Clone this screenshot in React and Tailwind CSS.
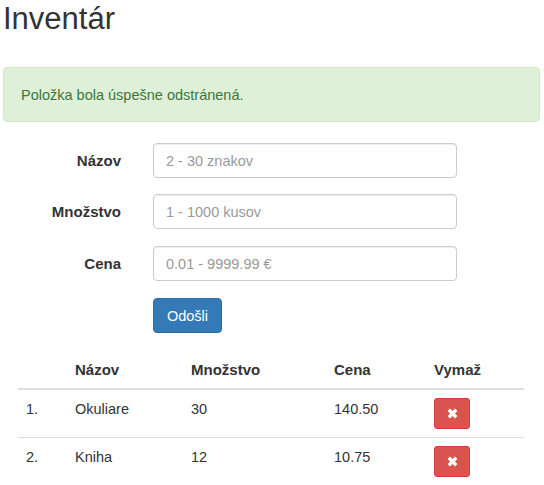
export default function App() {
  const rows = [
    { n: "1.", name: "Okuliare", qty: "30", price: "140.50" },
    { n: "2.", name: "Kniha", qty: "12", price: "10.75" },
  ];
  const font = { fontFamily: '"Liberation Sans", Arial, sans-serif' };
  return (
    <div className="w-[544px] bg-white text-[#333] text-[14.5px] leading-[20px] pl-[3px] pr-[4px]" style={font}>
      <h1 className="text-[31px] leading-[33px] mt-[2px] font-normal text-[#333]">Inventár</h1>
      <div className="mt-[32px] h-[55px] flex items-center border border-[#d6e9c6] bg-[#dff0d8] rounded-[4px] px-[17px] text-[#3c763d]">
        Položka bola úspešne odstránená.
      </div>
      <div className="mt-[21px] flex flex-col">
        {[
          ["Názov", "2 - 30 znakov", ""],
          ["Množstvo", "1 - 1000 kusov", "mt-[16px]"],
          ["Cena", "0.01 - 9999.99 €", "mt-[17px]"],
        ].map(([label, ph, mt]) => (
          <div key={label} className={"flex items-center " + mt}>
            <div className="w-[118px] text-right font-bold text-[15px]">{label}</div>
            <input
              className="ml-[32px] w-[304px] h-[35px] border border-[#ccc] rounded-[4px] px-[12px] text-[14.5px] text-[#555] placeholder:text-[#999] shadow-[inset_0_1px_1px_rgba(0,0,0,0.075)] outline-none"
              placeholder={ph}
              style={font}
            />
          </div>
        ))}
        <div className="flex mt-[17px]">
          <button
            className="ml-[150px] h-[35px] w-[69px] bg-[#337ab7] border border-[#2e6da4] rounded-[4px] text-white text-[14.5px]"
            style={font}
          >
            Odošli
          </button>
        </div>
      </div>
      <table className="mt-[19px] ml-[15px] w-[506px] border-collapse">
        <thead>
          <tr className="border-b-2 border-[#ddd]">
            <th className="w-[49px] p-[8px] text-left font-bold text-[15px]"></th>
            <th className="w-[116px] p-[8px] text-left font-bold text-[15px]">Názov</th>
            <th className="w-[143px] p-[8px] text-left font-bold text-[15px]">Množstvo</th>
            <th className="w-[100px] p-[8px] text-left font-bold text-[15px]">Cena</th>
            <th className="w-[98px] p-[8px] text-left font-bold text-[15px]">Vymaž</th>
          </tr>
        </thead>
        <tbody>
          {rows.map((r, i) => (
            <tr key={r.n} className={i === 0 ? "border-b border-[#ddd]" : ""}>
              <td className="p-[8px] pt-[9px] align-top">{r.n}</td>
              <td className="p-[8px] pt-[9px] align-top">{r.name}</td>
              <td className="p-[8px] pt-[9px] align-top">{r.qty}</td>
              <td className="p-[8px] pt-[9px] align-top">{r.price}</td>
              <td className="p-[8px] align-top">
                <button className="w-[36px] h-[31px] flex items-center justify-center bg-[#d9534f] border border-[#d43f3a] rounded-[3px]">
                  <svg width="11" height="11" viewBox="0 0 11 11">
                    <path d="M1.8 1.8 L9.2 9.2 M9.2 1.8 L1.8 9.2" stroke="white" strokeWidth="3.4" />
                  </svg>
                </button>
              </td>
            </tr>
          ))}
        </tbody>
      </table>
    </div>
  );
}
